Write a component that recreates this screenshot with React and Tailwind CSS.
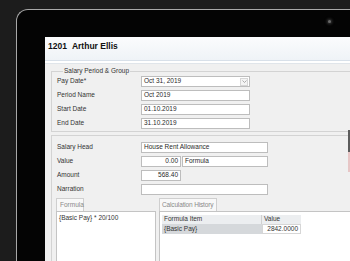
import React from 'react';

const font = { fontFamily: '"Liberation Sans", Arial, sans-serif' };

function Field({ label, children }) {
  return (
    <div className="flex items-center h-[11px]">
      <div className="w-[84px] shrink-0 text-[6.5px] leading-none text-[#333]">{label}</div>
      {children}
    </div>
  );
}

function Box({ className = '', children, align = 'left' }) {
  return (
    <div
      className={`h-[11px] bg-white border border-[#bdbdbd] px-[2px] flex items-center text-[6.5px] leading-none text-[#2a2a2a] ${
        align === 'right' ? 'justify-end' : ''
      } ${className}`}
    >
      {children}
    </div>
  );
}

export default function App() {
  return (
    <div className="relative w-[350px] h-[261px] overflow-hidden bg-[#1c1c1c] pl-[16px] pt-[9px]" style={font}>
      {/* device bezel */}
      <div className="relative w-[440px] h-[270px] rounded-tl-[12px] border-t-[1.5px] border-l-[1.5px] border-[#a8a8a8] bg-[#040404] pl-[28px] pt-[27px]">
        <div className="absolute left-[311px] top-[10px] w-[3px] h-[3px] rounded-full bg-[#6a6a6a] shadow-[0_0_3px_1px_rgba(120,120,120,0.5)]" />

        {/* screen */}
        <div className="w-[400px] h-[240px] bg-[#f0f0f0] flex flex-col">
          {/* title bar */}
          <div className="h-[23px] bg-gradient-to-b from-[#fbfcfd] to-[#eff3f7] pl-[3px] pt-[5px] text-[8.5px] font-bold text-[#111] leading-none">
            <span>1201</span>
            <span className="ml-[5px]">Arthur Ellis</span>
          </div>
          <div className="h-[1px] bg-[#d8e0e9]" />
          <div className="h-[2px] bg-white" />
          <div className="h-[1px] bg-[#e0e5ea]" />

          <div className="pl-[6px] flex flex-col">
            {/* salary period group */}
            <fieldset className="mt-[3px] border border-[#d3d3d3] pl-[5px] pb-[2px]">
              <legend className="ml-[6px] px-[1px] text-[6.5px] leading-[8px] text-[#333]">Salary Period &amp; Group</legend>
              <div className="flex flex-col gap-[3px] pt-[1px]">
                <Field label="Pay Date*">
                  <Box className="w-[109px] justify-between pr-[1px]">
                    <span>Oct 31, 2019</span>
                    <span className="w-[8px] h-[8px] border border-[#d6d6d6] bg-[#f4f4f4] flex items-center justify-center">
                      <svg width="5" height="3" viewBox="0 0 5 3">
                        <path d="M0.5 0.5 L2.5 2.5 L4.5 0.5" fill="none" stroke="#9a9a9a" strokeWidth="0.8" />
                      </svg>
                    </span>
                  </Box>
                </Field>
                <Field label="Period Name">
                  <Box className="w-[109px]">Oct 2019</Box>
                </Field>
                <Field label="Start Date">
                  <Box className="w-[109px]">01.10.2019</Box>
                </Field>
                <Field label="End Date">
                  <Box className="w-[109px]">31.10.2019</Box>
                </Field>
              </div>
            </fieldset>

            {/* salary head section */}
            <div className="mt-[3px] border border-[#d3d3d3] pt-[6px]">
              <div className="flex flex-col gap-[3px] pl-[5px]">
                <Field label="Salary Head">
                  <Box className="w-[127px]">House Rent Allowance</Box>
                </Field>
                <Field label="Value">
                  <Box className="w-[40px]" align="right">0.00</Box>
                  <Box className="w-[86px] ml-[1px]">Formula</Box>
                </Field>
                <Field label="Amount">
                  <Box className="w-[40px]" align="right">568.40</Box>
                </Field>
                <Field label="Narration">
                  <Box className="w-[127px]" />
                </Field>
              </div>

              {/* tabs */}
              <div className="flex gap-[3px] mt-[3px] pl-[4px]">
                <div className="w-[100px] flex flex-col">
                  <div className="w-[28px] h-[13px] border border-b-0 border-[#cfcfcf] bg-[#f8f8f8] pl-[3px] pt-[3px] text-[6.5px] leading-none text-[#8a8a8a]">
                    Formula
                  </div>
                  <div className="h-[60px] bg-white border border-[#c4c4c4] pl-[2px] pt-[3px] text-[6.5px] leading-none text-[#333]">
                    {'{Basic Pay} * 20/100'}
                  </div>
                </div>
                <div className="flex-1 flex flex-col">
                  <div className="w-[58px] h-[13px] border border-b-0 border-[#cfcfcf] bg-[#f8f8f8] pl-[2px] pt-[3px] text-[6.5px] leading-none text-[#8a8a8a] whitespace-nowrap overflow-hidden tracking-[-0.15px]">
                    Calculation History
                  </div>
                  <div className="h-[60px] bg-white border border-[#c4c4c4] pl-[2px] pt-[3px]">
                    <div className="flex flex-col w-[139px] text-[6.5px] leading-none text-[#333]">
                      <div className="flex h-[9px] bg-[#eceef0]">
                        <div className="w-[100px] pl-[2px] flex items-center border-r border-[#d0d0d0]">Formula Item</div>
                        <div className="flex-1 pl-[2px] flex items-center">Value</div>
                      </div>
                      <div className="flex h-[10px]">
                        <div className="w-[100px] pl-[2px] flex items-center bg-[#d5d8db]">{'{Basic Pay}'}</div>
                        <div className="flex-1 pr-[2px] flex items-center justify-end bg-white border border-[#d6d6d6]">2842.0000</div>
                      </div>
                    </div>
                  </div>
                </div>
              </div>
            </div>
          </div>
        </div>
      </div>

      {/* right edge strip */}
      <div className="absolute right-0 top-[130px] w-[2px] h-[22px] bg-[#5c5c5c]" />
      <div className="absolute right-0 top-[152px] w-[2px] h-[20px] bg-[#e7c6c6]" />
    </div>
  );
}
